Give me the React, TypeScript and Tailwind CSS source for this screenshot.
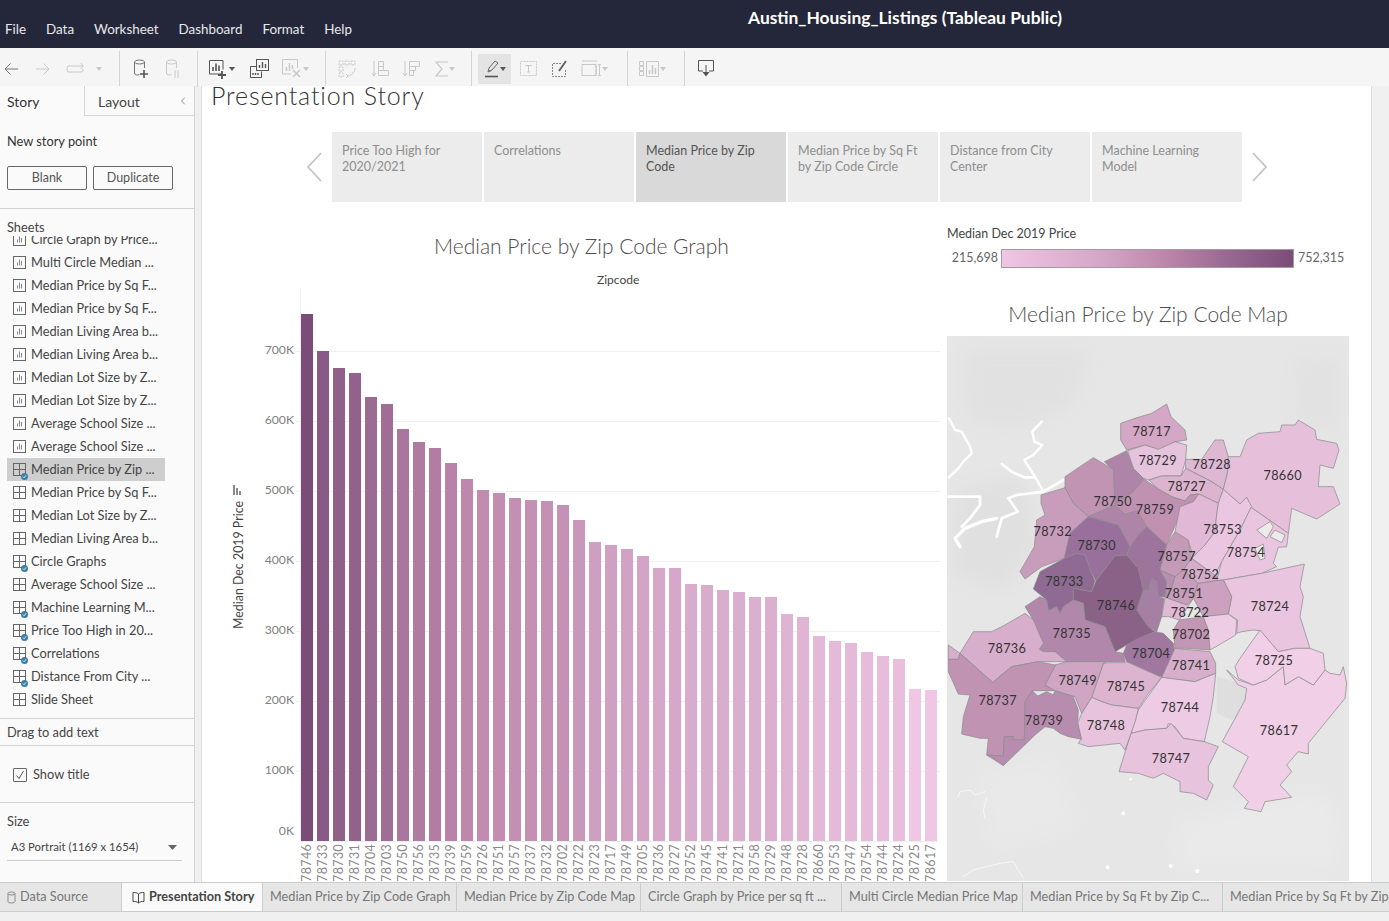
import React from "react";
import { ChevronLeft } from "lucide-react";

const zips = ["78746","78733","78730","78731","78704","78703","78750","78756","78735","78739","78759","78726","78751","78757","78737","78732","78702","78722","78723","78717","78749","78705","78736","78727","78752","78745","78741","78721","78758","78729","78748","78728","78660","78753","78747","78754","78744","78724","78725","78617"];
const tops = [314,351,368,373,397,404,429,442,448,463,479,490,493,498,500,501,505,520,542,545,549,556,568,568,584,585,590,592,597,597,614,617,636,641,643,652,656,659,689,690];

const stops: [number, number[]][] = [
  [0, [239, 198, 228]],
  [0.35, [212, 165, 198]],
  [0.6, [186, 131, 168]],
  [0.8, [152, 104, 146]],
  [1, [123, 76, 120]],
];

const shade = (t: number) => {
  for (let i = 1; i < stops.length; i++) {
    if (t <= stops[i][0]) {
      const [a, ca] = stops[i - 1];
      const [b, cb] = stops[i];
      const k = (t - a) / (b - a);
      return `rgb(${ca.map((c, j) => Math.round(c + (cb[j] - c) * k)).join(",")})`;
    }
  }
  return "rgb(123,76,120)";
};

const sheets = [
  { name: "Circle Graph by Price...", kind: "s" },
  { name: "Multi Circle Median ...", kind: "s" },
  { name: "Median Price by Sq F...", kind: "s" },
  { name: "Median Price by Sq F...", kind: "s" },
  { name: "Median Living Area b...", kind: "s" },
  { name: "Median Living Area b...", kind: "s" },
  { name: "Median Lot Size by Z...", kind: "s" },
  { name: "Median Lot Size by Z...", kind: "s" },
  { name: "Average School Size ...", kind: "s" },
  { name: "Average School Size ...", kind: "s" },
  { name: "Median Price by Zip ...", kind: "d", badge: true, active: true },
  { name: "Median Price by Sq F...", kind: "d" },
  { name: "Median Lot Size by Z...", kind: "d" },
  { name: "Median Living Area b...", kind: "d" },
  { name: "Circle Graphs", kind: "d", badge: true },
  { name: "Average School Size ...", kind: "d" },
  { name: "Machine Learning M...", kind: "d", badge: true },
  { name: "Price Too High in 20...", kind: "d", badge: true },
  { name: "Correlations", kind: "d", badge: true },
  { name: "Distance From City ...", kind: "d", badge: true },
  { name: "Slide Sheet", kind: "d" },
];

const storyPoints = [
  { text: "Price Too High for 2020/2021" },
  { text: "Correlations" },
  { text: "Median Price by Zip Code", active: true },
  { text: "Median Price by Sq Ft by Zip Code Circle" },
  { text: "Distance from City Center" },
  { text: "Machine Learning Model" },
];

// map shapes, in 3x coordinates
const regions: [string, string][] = [
  ["#d3a7c5", "545,180 527,150 527,100 570,85 620,70 665,42 678,80 720,120 725,150 690,155 640,180 600,165"],
  ["#e6c3dc", "548,182 600,165 640,178 690,155 725,165 722,210 708,258 650,258 610,270 595,265 565,235"],
  ["#deb7d3", "722,208 770,208 810,150 835,150 850,200 847,250 835,298 800,275 722,235"],
  ["#e6c0da", "850,200 885,200 905,150 940,130 1005,125 1010,105 1050,105 1060,90 1110,120 1115,148 1175,160 1182,180 1165,235 1125,225 1120,290 1165,290 1185,342 1115,387 1040,355 1030,430 918,352 905,322 885,342 835,298 847,250"],
  ["#dcb4d0", "612,270 650,258 708,258 722,235 800,275 835,298 820,340 762,312 735,315 720,333 680,320 640,297"],
  ["#ae85a9", "478,215 545,182 565,235 597,267 565,305 510,345 505,240"],
  ["#c194b4", "360,260 445,203 505,238 510,345 430,380 385,340 360,295"],
  ["#c89dbb", "288,315 360,293 385,340 430,380 375,430 358,505 290,530 240,567 225,545 268,470 275,390 300,375 288,340"],
  ["#ae85a9", "510,345 540,372 578,362 605,410 580,435 555,470 520,405 430,380"],
  ["#c191b2", "597,267 640,297 680,320 720,333 735,315 760,312 745,335 710,350 700,385 665,465 605,410 578,362 540,372 510,345 565,305"],
  ["#98709b", "430,380 520,405 555,470 545,495 510,497 453,572 438,545 420,495 395,490 358,505 375,430"],
  ["#8f6a92", "358,505 395,490 420,495 438,545 450,572 440,605 385,595 385,630 355,650 345,670 335,650 310,662 305,630 265,597 285,545"],
  ["#9c749c", "555,470 580,435 605,410 665,465 645,540 665,575 660,620 640,622 635,575 620,565 612,600 595,600 580,535 545,495"],
  ["#a67fa5", "595,600 612,600 620,565 635,575 640,622 657,625 650,680 635,725 610,710 575,660"],
  ["#8a6287", "510,497 545,495 580,535 595,600 575,660 610,710 630,725 545,765 510,785 480,710 420,690 415,640 385,630 385,595 440,605 453,572"],
  ["#c59ab9", "690,425 730,450 740,505 715,540 690,560 645,540 665,465"],
  ["#b98fb0", "645,540 690,560 680,595 665,625 660,620 665,575"],
  ["#c89dbb", "690,560 715,540 760,580 745,625 725,645 660,622 680,595"],
  ["#d6acca", "740,505 830,570 760,580 715,540"],
  ["#e1b9d6", "745,335 762,312 820,340 815,375 810,425 780,465 745,505 730,450 690,425 705,350"],
  ["#eac6e0", "835,298 885,342 905,322 920,350 885,420 830,515 815,545 830,570 740,505 780,465 810,425 815,375 820,340"],
  ["#e9c5df", "918,352 1030,430 1025,470 1000,472 985,520 995,530 950,550 835,570 815,572 830,515 885,420"],
  ["#e9c5df", "835,570 950,550 1078,522 1065,590 1075,620 1065,680 1095,775 1050,775 1000,785 945,722 925,720 890,725 875,730 878,690 850,672 860,620"],
  ["#dfb9d5", "660,622 725,645 745,625 703,690 672,680 650,680"],
  ["#cca1bf", "760,580 815,572 835,570 860,620 850,672 775,680 745,625"],
  ["#c496b6", "703,690 775,680 790,720 795,780 725,775 690,775 685,720"],
  ["#edcce4", "775,680 850,672 875,690 872,735 830,760 795,780 790,720"],
  ["#9f779f", "545,765 580,745 630,725 655,730 685,760 690,790 650,862 600,840 545,815 535,790"],
  ["#d7aecc", "690,775 795,785 812,820 812,850 750,875 650,862"],
  ["#edcbe4", "650,862 750,875 812,850 805,920 795,980 778,1055 715,1045 690,1010 670,1000 665,1015 600,1020 558,1030 580,960"],
  ["#e7c3dd", "558,1030 600,1020 665,1015 678,1000 715,1045 778,1055 820,1070 790,1130 790,1170 805,1185 785,1230 745,1210 705,1205 705,1175 655,1150 625,1165 580,1150 522,1145"],
  ["#f0cfe7", "845,840 880,870 925,885 965,870 1015,830 1020,885 1060,860 1105,885 1140,840 1155,850 1185,855 1195,830 1205,880 1200,925 1090,1060 1090,1092 1060,1085 1025,1125 1040,1145 1005,1185 1040,1222 960,1235 948,1265 898,1255 910,1235 865,1190 910,1100 832,1055 900,930 905,895 880,885"],
  ["#f0cfe7", "870,830 885,805 945,720 1000,785 1050,775 1095,775 1135,790 1140,840 1105,885 1060,860 1020,885 1015,830 965,870 925,885 880,865"],
  ["#dcb4d0", "440,922 475,820 490,818 535,818 545,815 600,840 650,862 610,910 580,955 500,945 470,935"],
  ["#e7c3dd", "440,922 470,935 500,945 580,955 572,990 558,1030 540,1080 525,1060 430,1070 400,1060 408,1048 398,1000 410,970"],
  ["#cfa5c3", "330,825 365,815 490,812 475,820 440,922 410,970 390,920 330,902 300,885"],
  ["#b187ab", "240,650 285,620 305,630 310,662 335,650 345,670 355,650 385,630 415,640 420,690 480,710 510,785 535,790 540,815 365,815 330,785 295,785 283,778 295,760 265,690"],
  ["#d7aecb", "45,790 85,725 140,725 180,705 240,670 265,690 295,760 283,778 295,785 330,785 365,815 280,815 200,830 143,877"],
  ["#d7aecb", "10,765 45,790 40,808 10,808"],
  ["#c193b3", "10,808 40,808 45,790 143,877 200,830 280,815 332,825 300,885 327,902 262,902 240,935 238,1050 205,1050 205,1040 178,1040 175,1098 125,1095 130,1045 105,1045 50,1032 55,980 75,915 40,912 10,845"],
  ["#b88cae", "262,902 278,918 305,905 325,915 330,902 385,920 400,960 398,1000 410,1048 370,1040 345,1030 325,1015 300,1010 270,1035 175,1127 125,1095 175,1098 178,1040 205,1040 205,1050 238,1050 240,935"],
];

const holes = [
  "935,420 975,395 985,410 965,445",
  "975,440 990,420 1020,435 1010,458",
  "930,475 955,462 960,505 945,510",
];

const mapLabels: [string, number, number][] = [
  ["78717",620,125],["78729",638,212],["78728",800,224],["78660",1013,256],["78727",725,290],["78750",503,335],["78759",630,358],["78732",323,425],["78753",833,420],["78730",455,467],["78757",695,500],["78754",903,487],["78733",358,575],["78752",765,553],["78751",717,610],["78724",975,650],["78746",513,647],["78722",735,667],["78735",380,730],["78702",738,735],["78736",186,775],["78704",618,790],["78741",738,826],["78725",987,811],["78749",398,872],["78745",543,890],["78737",158,932],["78739",297,992],["78744",705,952],["78748",483,1007],["78617",1002,1021],["78747",678,1105],
];

const SheetIcon = ({ kind, badge }: { kind: string; badge?: boolean }) => (
  <span className="relative mr-[5px] flex h-[14px] w-[13px] shrink-0 items-center">
    {kind === "s" ? (
      <svg width="13" height="13" viewBox="0 0 13 13" fill="none" stroke="#666">
        <rect x="0.5" y="0.5" width="12" height="12" />
        <path d="M4.5 9.5V6.5M6.5 9.5V3.5M8.5 9.5V5" stroke="#888" />
      </svg>
    ) : (
      <svg width="13" height="13" viewBox="0 0 13 13" fill="none" stroke="#666">
        <rect x="0.5" y="0.5" width="12" height="12" />
        <path d="M6.5 0.5V12.5M0.5 6.5H12.5" />
      </svg>
    )}
    {badge && (
      <span className="absolute -bottom-[3px] -right-[2px] flex h-[7px] w-[7px] items-center justify-center rounded-full bg-[#3b7ea6]">
        <svg width="5" height="5" viewBox="0 0 6 6" fill="none" stroke="#fff" strokeWidth="1">
          <path d="M1 3l1.5 1.5L5 1.5" />
        </svg>
      </span>
    )}
  </span>
);

const Sep = () => <div className="h-[36px] w-px shrink-0 bg-[#d4d4d4]" />;
const Caret = ({ c = "#c8c8c8" }: { c?: string }) => (
  <svg width="6" height="4" viewBox="0 0 6 4" className="ml-px"><path d="M0 0h6L3 4z" fill={c} /></svg>
);

const Toolbar = () => (
  <div className="flex h-[38px] items-center bg-[#f5f5f5] pt-[3px]">
    <div className="flex w-[22px] justify-center">
      <svg width="16" height="14" viewBox="0 0 16 14" fill="none" stroke="#777"><path d="M15 7H2M7.5 1.5L2 7l5.5 5.5" /></svg>
    </div>
    <div className="flex w-[42px] justify-center">
      <svg width="16" height="14" viewBox="0 0 16 14" fill="none" stroke="#c8c8c8"><path d="M1 7h13M8.5 1.5L14 7l-5.5 5.5" /></svg>
    </div>
    <div className="flex w-[22px] justify-center">
      <svg width="19" height="12" viewBox="0 0 19 12" fill="none" stroke="#c8c8c8"><path d="M12 3H3a2 2 0 0 0-2 2v2a2 2 0 0 0 2 2h12a2 2 0 0 0 2-2V6M15 6l2-3-2-3M17 3h-5" /></svg>
    </div>
    <div className="flex w-[24px] justify-center"><Caret /></div>
    <div className="w-[9px]" />
    <Sep />
    <div className="flex w-[42px] justify-center">
      <svg width="16" height="20" viewBox="0 0 16 20" fill="none" stroke="#777">
        <ellipse cx="6.5" cy="3" rx="5" ry="2" />
        <path d="M1.5 3v11a3 2 0 0 0 5 1.5M11.5 3v6" />
        <path d="M11 11v8M7 15h8" stroke="#555" strokeWidth="1.6" />
      </svg>
    </div>
    <div className="flex w-[22px] justify-center">
      <svg width="16" height="20" viewBox="0 0 16 20" fill="none" stroke="#c8c8c8">
        <ellipse cx="6.5" cy="3" rx="5" ry="2" />
        <path d="M1.5 3v11a3 2 0 0 0 5 1.5M11.5 3v6M10 11v8M13 11v8" />
      </svg>
    </div>
    <div className="w-[13px]" />
    <Sep />
    <div className="flex w-[46px] items-center justify-center">
      <svg width="20" height="20" viewBox="0 0 20 20" fill="none" stroke="#555">
        <path d="M13 15H1.5V1.5H15v9" />
        <path d="M5 12V8M8 12V4.5M11 12V6.5" strokeWidth="1.6" />
        <path d="M14 12v8M10 16h8" strokeWidth="1.8" />
      </svg>
      <Caret c="#555" />
    </div>
    <div className="flex w-[30px] justify-center">
      <svg width="19" height="19" viewBox="0 0 19 19" fill="none" stroke="#555">
        <rect x="6.5" y="0.5" width="12" height="11" />
        <path d="M9.5 9V6M12.5 9V3M15.5 9V5" strokeWidth="1.4" />
        <path d="M6 7.5H0.5v11h11v-6" />
        <path d="M3 16v-2M5.5 16v-2M8 16v-2" strokeWidth="1.4" />
      </svg>
    </div>
    <div className="flex w-[42px] items-center justify-center">
      <svg width="20" height="19" viewBox="0 0 20 19" fill="none" stroke="#c8c8c8">
        <path d="M15.5 9V0.5H0.5V15H9" />
        <path d="M4.5 12V8M7.5 12V4M10.5 10V6" strokeWidth="1.4" />
        <path d="M11 11l7 7M18 11l-7 7" strokeWidth="1.6" />
      </svg>
      <Caret />
    </div>
    <div className="w-[9px]" />
    <Sep />
    <div className="flex w-[42px] justify-center">
      <svg width="18" height="18" viewBox="0 0 18 18" fill="none" stroke="#c8c8c8" strokeDasharray="2 1">
        <path d="M1 1h4v4H1zM7 1h4v4H7zM13 1h4v4h-4zM1 7h4v4H1zM1 13h4v4H1z" />
        <path d="M17 8c0 4-3 7-7 8M8 14l2 2-2 2" strokeDasharray="none" />
      </svg>
    </div>
    <div className="flex w-[24px] justify-center">
      <svg width="18" height="18" viewBox="0 0 18 18" fill="none" stroke="#c8c8c8">
        <path d="M3 1v15M1 13l2 3 2-3M7.5 1.5h5v5h-5zM7.5 6.5h5v4h-5zM7.5 10.5h10v5h-10z" />
      </svg>
    </div>
    <div className="flex w-[38px] justify-center">
      <svg width="18" height="18" viewBox="0 0 18 18" fill="none" stroke="#c8c8c8">
        <path d="M3 1v15M1 13l2 3 2-3M7.5 1.5h10v5h-10zM7.5 6.5h6v4h-6zM7.5 10.5h4v5h-4z" />
      </svg>
    </div>
    <div className="flex w-[30px] items-center justify-center">
      <svg width="13" height="16" viewBox="0 0 13 16" fill="none" stroke="#c8c8c8" strokeWidth="1.2"><path d="M12 2V1H1l6 7-6 7h11v-1" /></svg>
      <Caret />
    </div>
    <div className="w-[11px]" />
    <Sep />
    <div className="w-[6px]" />
    <div className="flex h-[30px] w-[33px] items-center justify-center bg-[#e4e4e4]">
      <svg width="15" height="18" viewBox="0 0 15 18" fill="none" stroke="#666">
        <path d="M4 12l1-4 6-7 3 2-6 7-4 2zM4.5 10l2 1.5" />
        <path d="M1 16.5h13" strokeWidth="1.6" stroke="#555" />
      </svg>
      <Caret c="#555" />
    </div>
    <div className="flex w-[34px] justify-center">
      <svg width="17" height="15" viewBox="0 0 17 15" fill="none" stroke="#c8c8c8">
        <rect x="0.5" y="0.5" width="16" height="14" strokeDasharray="2 1" />
        <path d="M5.5 4.5h6M8.5 4.5v6.5M7 11h3" />
      </svg>
    </div>
    <div className="flex w-[30px] justify-center">
      <svg width="16" height="17" viewBox="0 0 16 17" fill="none" stroke="#888">
        <path d="M9 3.5H0.5v13h13V9" strokeDasharray="2 1" />
        <path d="M14 1L7 11" strokeWidth="2" stroke="#666" />
      </svg>
    </div>
    <div className="flex w-[38px] items-center justify-center">
      <svg width="20" height="17" viewBox="0 0 20 17" fill="none" stroke="#c8c8c8">
        <path d="M1 1h15M1 4.5h14v11H1zM15 4.5v11M17 4.5h3M18.5 4.5v11M17 15.5h3" />
      </svg>
      <Caret />
    </div>
    <div className="w-[14px]" />
    <Sep />
    <div className="flex w-[48px] items-center justify-center">
      <svg width="20" height="16" viewBox="0 0 20 16" fill="none" stroke="#c8c8c8">
        <path d="M0.5 0.5h4v4h-4zM0.5 5.5h4v4h-4zM0.5 10.5h4v4h-4zM7.5 0.5h12v15h-12z" />
        <path d="M10.5 13V9M13.5 13V4M16.5 13V7" strokeWidth="1.5" />
      </svg>
      <Caret />
    </div>
    <div className="w-[8px]" />
    <Sep />
    <div className="flex w-[41px] justify-center">
      <svg width="16" height="17" viewBox="0 0 16 17" fill="none" stroke="#555">
        <path d="M5 11H0.5V0.5h15V11H11" />
        <path d="M8 5v10" />
        <path d="M4.5 12L8 16.5l3.5-4.5z" fill="#555" stroke="none" />
      </svg>
    </div>
  </div>
);

const Chart = () => (
  <svg viewBox="202 285 745 596" className="h-[596px] w-[745px] shrink-0" fontFamily="Lato, sans-serif">
    {[351, 421, 491, 561, 631, 701, 771].map((y) => (
      <line key={y} x1="296" x2="940" y1={y + 0.5} y2={y + 0.5} stroke="#efefef" />
    ))}
    <line x1="300.5" x2="300.5" y1="288" y2="841" stroke="#eeeeee" />
    {["700K", "600K", "500K", "400K", "300K", "200K", "100K"].map((t, i) => (
      <text key={t} x="294" y={354 + i * 70} textAnchor="end" fontSize="12.2" fill="#808080">{t}</text>
    ))}
    <text x="294" y="835" textAnchor="end" fontSize="12.2" fill="#808080">0K</text>
    <text transform="translate(243 565) rotate(-90)" textAnchor="middle" fontSize="12.4" fill="#444">Median Dec 2019 Price</text>
    <path d="M234 485v10M237 488v7M240 491v4" stroke="#666" strokeWidth="1.5" />
    {tops.map((t, i) => (
      <rect key={i} x={301 + i * 16} y={t} width="12" height={841 - t} fill={shade((841 - t - 151) / (527 - 151))} />
    ))}
    <line x1="300" x2="940" y1="841.5" y2="841.5" stroke="#eeeeee" />
    {zips.map((z, i) => (
      <text key={z} transform={`translate(${311 + i * 16} 882) rotate(-90)`} fontSize="12.5" letterSpacing="0.4" fill="#8a8a8a">{z}</text>
    ))}
  </svg>
);

const AustinMap = () => (
  <svg viewBox="6 -162 1206 1635" className="h-[545px] w-[402px] shrink-0" fontFamily="Lato, sans-serif">
    <defs>
      <filter id="soft" x="-20%" y="-20%" width="140%" height="140%">
        <feGaussianBlur stdDeviation="30" />
      </filter>
    </defs>
    <rect x="6" y="-162" width="1206" height="1635" fill="#e6e6e6" />
    <g filter="url(#soft)">
      <path d="M60 -120h380l-60 180 -200 60 -120 -40z" fill="#e1e1e1" />
      <path d="M700 1300l400 -100 80 60v180h-480z" fill="#eaeaea" />
      <path d="M30 300l200 -40 60 200 -120 150 -150 -60z" fill="#e0e0e0" />
      <path d="M100 1150l220 -40 80 200 -260 60z" fill="#e9e9e9" />
      <path d="M1040 -100h150v220h-150z" fill="#e2e2e2" />
    </g>
    <path d="M815 860l90 25-10 75-35 30-45-20z" fill="#dedede" />
    <g fill="none" stroke="#ffffff" strokeLinejoin="round" strokeLinecap="round">
      <path d="M12 85l18 35 20 5 25 45 5 20-25 25-15 20-28 27" strokeWidth="7" />
      <path d="M290 95l-28 30 6 30 24 10-27 30-27 15 32 50 25 45" strokeWidth="7" />
      <path d="M170 222l30 23 38 17h32" strokeWidth="8" />
      <path d="M355 270l-60 35-80 10-25 10 28 40-48 20-15 55" strokeWidth="8" />
      <path d="M155 385l-45 10-50 20-30 30 15 25" strokeWidth="10" />
      <path d="M10 320h95v25l-30 40-25 25" strokeWidth="8" />
      <path d="M40 1220l5 -15 30 -5 15 15 30 -10M125 1225l-10 35 5 25" strokeWidth="2" />
      <path d="M55 1460l30 -20 80 -20 40 -5 30 50" strokeWidth="2" />
    </g>
    <g fill="#ffffff">
      <circle cx="535" cy="1270" r="6" />
      <circle cx="557" cy="1168" r="4" />
      <circle cx="677" cy="1428" r="6" />
      <circle cx="757" cy="1443" r="6" />
      <circle cx="488" cy="1432" r="6" />
    </g>
    <g stroke="#8c8c8c" strokeWidth="2.2" strokeLinejoin="round">
      {regions.map(([c, p], i) => (
        <polygon key={i} points={p} fill={c} />
      ))}
      {holes.map((p) => (
        <polygon key={p} points={p} fill="#ebebeb" />
      ))}
    </g>
    {mapLabels.map(([t, x, y]) => (
      <text key={t} x={x} y={y + 13} textAnchor="middle" fontSize="38" letterSpacing="1" fill="#333333">{t}</text>
    ))}
  </svg>
);

const StoryNav = () => (
  <div className="flex h-[70px] shrink-0 items-center">
    <div className="flex w-[130px] justify-end pr-[10px]">
      <svg width="16" height="30" viewBox="0 0 16 30" fill="none" stroke="#c4c4c4" strokeWidth="1.8">
        <path d="M15 1L2 15l13 14" />
      </svg>
    </div>
    <div className="flex h-full gap-[2px]">
      {storyPoints.map((p) => (
        <div
          key={p.text}
          className={`w-[150px] px-[10px] pt-[11px] text-[12.5px] leading-[16px] ${p.active ? "bg-[#d9d9d9] text-[#555555]" : "bg-[#ececec] text-[#8e8e8e]"}`}
        >
          {p.text}
        </div>
      ))}
    </div>
    <svg width="16" height="30" viewBox="0 0 16 30" fill="none" stroke="#c4c4c4" strokeWidth="1.8" className="ml-[10px]">
      <path d="M1 1l13 14L1 29" />
    </svg>
  </div>
);

const Sidebar = () => (
  <aside className="flex h-full w-[195px] shrink-0 flex-col border-r border-[#d4d4d4] bg-[#fafafa] text-[12.8px] text-[#444444]">
    <div className="flex h-[30px] shrink-0 items-center">
      <div className="w-[84px] pl-[7px] pt-[1px] text-[14px] text-[#333333]">Story</div>
      <div className="flex h-full flex-1 items-center justify-between border-b border-l border-[#d4d4d4] pl-[13px] pr-[5px] pt-[1px] text-[14px]">
        Layout
        <ChevronLeft className="h-[12px] w-[12px] text-[#666666]" strokeWidth={1.5} />
      </div>
    </div>
    <div className="h-[93px] shrink-0 border-b border-[#d4d4d4] px-[7px]">
      <div className="pt-[16px] leading-[18px] text-[#333333]">New story point</div>
      <div className="mt-[16px] flex gap-[6px] text-[12.5px] text-[#555555]">
        <div className="flex h-[24px] w-[80px] items-center justify-center rounded-[2px] border border-[#666666]">Blank</div>
        <div className="flex h-[24px] w-[80px] items-center justify-center rounded-[2px] border border-[#666666]">Duplicate</div>
      </div>
    </div>
    <div className="shrink-0 pl-[7px] pt-[10px] leading-[17px]">Sheets</div>
    <div className="h-[482px] shrink-0 overflow-hidden pt-px">
      <div className="-mt-[9px]">
        {sheets.map((s, i) => (
          <div
            key={i}
            className={`ml-[7px] flex h-[23px] w-[158px] items-center pl-[6px] ${s.active ? "bg-[#cecece]" : ""}`}
          >
            <SheetIcon kind={s.kind} badge={s.badge} />
            <span className="whitespace-nowrap">{s.name}</span>
          </div>
        ))}
      </div>
    </div>
    <div className="flex h-[28px] shrink-0 items-center border-y border-[#d4d4d4] pl-[7px] pt-[2px]">Drag to add text</div>
    <div className="flex h-[57px] shrink-0 items-center border-b border-[#d4d4d4] pl-[13px] pt-[2px]">
      <span className="mr-[6px] flex h-[14px] w-[14px] items-center justify-center rounded-[1px] border border-[#666666]">
        <svg width="10" height="10" viewBox="0 0 10 10" fill="none" stroke="#555" strokeWidth="1"><path d="M1.5 5.5l2.5 3 4.5-7.5" /></svg>
      </span>
      Show title
    </div>
    <div className="pl-[7px] pt-[10px] leading-[17px]">Size</div>
    <div className="mx-[7px] mt-[7px] flex h-[24px] w-[175px] items-center justify-between border-b border-[#cccccc] pb-[3px] pl-[4px] pr-[5px] text-[11.3px]">
      A3 Portrait (1169 x 1654)
      <svg width="9" height="5" viewBox="0 0 9 5"><path d="M0 0h9L4.5 5z" fill="#666" /></svg>
    </div>
  </aside>
);

const Tabs = () => (
  <footer className="flex h-[30px] shrink-0 items-stretch border-y border-[#cccccc] bg-[#e6e6e6] text-[12.7px] text-[#767676]">
    <div className="flex w-[121px] items-center pl-[7px]">
      <svg width="9" height="13" viewBox="0 0 9 13" fill="none" stroke="#8a8a8a" className="mr-[4px]">
        <ellipse cx="4.5" cy="2.5" rx="3.5" ry="1.5" />
        <path d="M1 2.5v8a3.5 1.5 0 0 0 7 0v-8" />
      </svg>
      Data Source
    </div>
    <div className="flex w-[142px] items-center border-x border-[#cccccc] bg-[#fafafa] pl-[10px] font-bold text-[#444444]">
      <svg width="13" height="13" viewBox="0 0 13 13" fill="none" stroke="#444" className="mr-[4px] shrink-0">
        <path d="M6.5 3C5 1.5 3 1.5 1 1.5v9c2 0 4 0 5.5 1.5 1.5-1.5 3.5-1.5 5.5-1.5v-9c-2 0-4 0-5.5 1.5zM6.5 3v9" />
      </svg>
      <span className="whitespace-nowrap">Presentation Story</span>
    </div>
    <div className="flex w-[194px] items-center whitespace-nowrap border-r border-[#cccccc] pl-[7px]">Median Price by Zip Code Graph</div>
    <div className="flex w-[184px] items-center whitespace-nowrap border-r border-[#cccccc] pl-[7px]">Median Price by Zip Code Map</div>
    <div className="flex w-[201px] items-center whitespace-nowrap border-r border-[#cccccc] pl-[7px]">Circle Graph by Price per sq ft ...</div>
    <div className="flex w-[181px] items-center whitespace-nowrap border-r border-[#cccccc] pl-[7px]">Multi Circle Median Price Map</div>
    <div className="flex w-[200px] items-center whitespace-nowrap border-r border-[#cccccc] pl-[7px]">Median Price by Sq Ft by Zip C...</div>
    <div className="flex flex-1 items-center overflow-hidden whitespace-nowrap pl-[7px]">Median Price by Sq Ft by Zip C...</div>
  </footer>
);

export default function App() {
  return (
    <div className="flex h-[921px] w-[1389px] flex-col overflow-hidden bg-[#f0f0f0] font-['Lato',sans-serif]">
      <header className="flex h-[48px] shrink-0 bg-[#232739] text-white">
        <nav className="flex w-[353px] shrink-0 items-start gap-[20px] pl-[5px] pt-[21px] text-[13.4px] leading-[17px] text-[#e8e8ec]">
          <span>File</span>
          <span>Data</span>
          <span>Worksheet</span>
          <span>Dashboard</span>
          <span>Format</span>
          <span>Help</span>
        </nav>
        <div className="ml-[395px] pt-[8px] text-[17.4px] font-bold leading-[20px]">Austin_Housing_Listings (Tableau Public)</div>
      </header>
      <Toolbar />
      <div className="flex h-[796px] shrink-0">
        <Sidebar />
        <div className="w-[6px] shrink-0" />
        <main className="flex w-[1171px] shrink-0 flex-col overflow-hidden border-x border-[#dcdcdc] bg-white text-[#4d4d4d]">
          <h1 className="-mt-[5px] h-[51px] shrink-0 pl-[9px] text-[25px] font-light leading-[29px] tracking-[0.85px] text-[#333333]">Presentation Story</h1>
          <StoryNav />
          <div className="flex min-h-0 flex-1">
            <div className="flex w-[745px] shrink-0 flex-col items-stretch">
              <div className="h-[83px] shrink-0">
                <div className="pl-[232px] pt-[32px] text-[21px] font-light leading-[24px]">Median Price by Zip Code Graph</div>
                <div className="pl-[395px] pt-[14px] text-[12px] leading-[15px] text-[#444444]">Zipcode</div>
              </div>
              <Chart />
            </div>
            <div className="flex w-[402px] shrink-0 flex-col">
              <div className="pt-[24px] text-[12.5px] leading-[15px] text-[#444444]">Median Dec 2019 Price</div>
              <div className="mt-[8px] flex h-[19px] items-center text-[12.5px] text-[#666666]">
                <span className="w-[54px] pr-[3px] text-right">215,698</span>
                <div className="h-[19px] w-[293px] border border-[#a59aa4] bg-[linear-gradient(to_right,#efc6e4,#d4a5c6_35%,#ba83a8_58%,#986892_78%,#7b4c78)]" />
                <span className="pl-[4px]">752,315</span>
              </div>
              <div className="h-[68px] shrink-0 pt-[34px] text-center text-[21px] font-light leading-[24px]">Median Price by Zip Code Map</div>
              <AustinMap />
            </div>
          </div>
        </main>
      </div>
      <Tabs />
    </div>
  );
}
